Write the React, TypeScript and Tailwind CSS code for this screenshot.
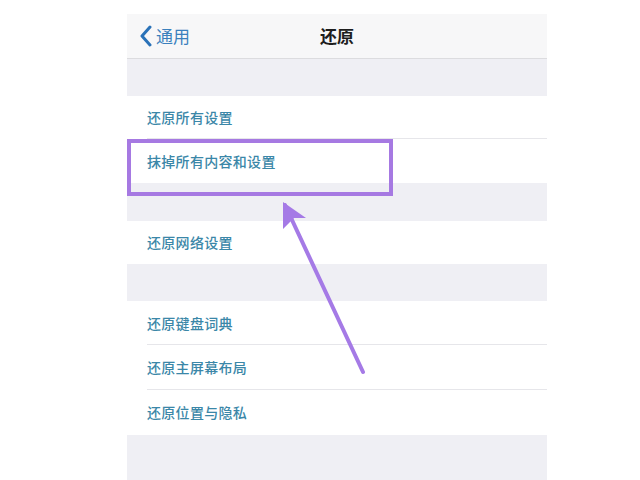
import React from "react";

const font = { fontFamily: '"Noto Sans CJK SC", "Noto Sans", sans-serif' };

function Row({ label, h, sep }: { label: string; h: string; sep?: boolean }) {
  return (
    <div className={`relative flex items-center bg-white pl-[20px] ${h}`}>
      <span className="text-[14px] font-medium tracking-[0.3px] text-[#3b87a8]">{label}</span>
      {sep && <div className="absolute bottom-0 left-[20px] right-0 h-px bg-[#e6e6ea]" />}
    </div>
  );
}

export default function App() {
  return (
    <div className="relative h-[480px] w-[640px] overflow-hidden bg-white" style={font}>
      <div className="ml-[127px] flex h-[480px] w-[420px] flex-col pt-[14px]">
        <div className="relative flex h-[45px] items-center justify-center border-b border-[#dcdcdf] bg-[#f7f7f8]">
          <div className="absolute left-[12px] top-0 flex h-full items-center gap-[3px]">
            <svg width="14" height="22" viewBox="0 0 14 22">
              <path d="M11 2 L3 11 L11 20" fill="none" stroke="#2a72b8" strokeWidth="3" strokeLinecap="round" strokeLinejoin="round" />
            </svg>
            <span className="text-[17px] text-[#3a80bd]">通用</span>
          </div>
          <span className="text-[17px] font-bold text-[#1e1e1e]">还原</span>
        </div>
        <div className="h-[37px] bg-[#efeff4]" />
        <Row label="还原所有设置" h="h-[43px]" sep />
        <Row label="抹掉所有内容和设置" h="h-[44px]" />
        <div className="h-[38px] bg-[#efeff4]" />
        <Row label="还原网络设置" h="h-[43px]" />
        <div className="h-[37px] bg-[#efeff4]" />
        <Row label="还原键盘词典" h="h-[44px]" sep />
        <Row label="还原主屏幕布局" h="h-[45px]" sep />
        <Row label="还原位置与隐私" h="h-[45px]" />
        <div className="flex-1 bg-[#efeff4]" />
      </div>
      <div className="absolute left-[127px] top-[139px] h-[57px] w-[266px] border-[4px] border-[#a679e2]" />
      <svg className="absolute left-0 top-0" width="640" height="480" viewBox="0 0 640 480">
        <g stroke="#a57ae6" strokeWidth="4" strokeLinecap="round" fill="none">
          <line x1="363" y1="372" x2="285" y2="205" />
        </g>
        <path d="M283 202 L306 218 L294 218 L290 222 L283 229 Z" fill="#a57ae6" />
      </svg>
    </div>
  );
}
